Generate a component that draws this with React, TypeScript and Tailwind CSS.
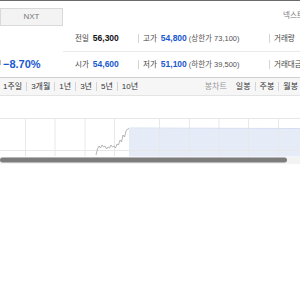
import React from 'react';

const Sep = () => <span className="inline-block shrink-0 w-px h-[9px] bg-[#d4d4d4] mx-[4px] align-middle" />;

const periods = ['1주일', '3개월', '1년', '3년', '5년', '10년'];

const StockChart: React.FC = () => {
  const vlines = [25.5, 55, 85, 114.5, 159.5, 189.5, 219, 248.5, 278.5];
  return (
    <svg width="300" height="46" viewBox="0 0 300 46" className="block">
      <rect x="129" y="10.5" width="171" height="28" fill="#e5ecf8" />
      <line x1="0" y1="0.5" x2="300" y2="0.5" stroke="#e6e6e6" />
      <line x1="0" y1="32.5" x2="300" y2="32.5" stroke="#e8e8e8" />
      {vlines.map((x) => (
        <line key={x} x1={x} y1="0" x2={x} y2="38" stroke="#e8e8e8" />
      ))}
      <line x1="129.5" y1="10" x2="300" y2="10.5" stroke="#d5def0" />
      <polyline
        points="96,37 97.5,31 99,28 100.5,30 102,27 103.5,29 105,28 106.5,31 108,29 109.5,30 111,27 112.5,29 114,28 115.5,30 117,26 118.5,27 120,22 121.5,24 123,17 124.5,19 126,13 127.5,11 129,10.5"
        fill="none"
        stroke="#a3a3a3"
        strokeWidth="0.8"
      />
      <rect x="0" y="39" width="300" height="7" fill="#f3f3f3" />
      <rect x="0" y="39.5" width="287" height="5" rx="2.5" fill="#7d7d7d" />
    </svg>
  );
};

const App: React.FC = () => {
  return (
    <div className="w-[300px] h-[300px] overflow-hidden bg-white font-['Liberation_Sans','Noto_Sans_CJK_KR',sans-serif] text-[#333] whitespace-nowrap">
      <div className="h-px bg-[#6b6b6b]" />
      {/* header */}
      <div className="flex h-[25px]">
        <div className="w-[63px] shrink-0 pt-[7px]">
          <div className="h-[18px] flex items-center justify-center bg-[#f3f3f3] border border-[#d9d9d9] text-[8px] text-[#777]">
            NXT
          </div>
        </div>
        <div className="flex-1 min-w-0 pl-[220px] pt-[9px] text-[7.5px] text-[#777] overflow-hidden">
          넥스트
        </div>
      </div>

      {/* price table */}
      <div className="flex">
        <div className="w-[63px] shrink-0 flex flex-col">
          <div className="h-[26px]" />
          <div className="h-[25px] flex items-center">
            <span className="w-px h-[5px] bg-[#bbb] self-start mt-[8px]" />
            <span className="ml-[2px] text-[11px] font-bold text-[#1859d1]">−8.70%</span>
          </div>
        </div>
        <div className="flex-1 min-w-0 flex flex-col overflow-hidden">
          <div className="h-[26px] flex items-center border-b border-[#e9e9e9] text-[7.5px]">
            <div className="w-[71px] shrink-0 pl-[12px] flex items-center">
              <span className="text-[#444]">전일</span>
              <span className="ml-[4px] text-[8.5px] font-bold text-[#111]">56,300</span>
            </div>
            <Sep />
            <div className="w-[122px] shrink-0 flex items-center">
              <span className="text-[#444]">고가</span>
              <span className="ml-[4px] text-[8.5px] font-bold text-[#1859d1]">54,800</span>
              <span className="ml-[2px] text-[#555]">(상한가 73,100)</span>
            </div>
            <Sep />
            <span className="shrink-0 text-[#444]">거래량</span>
          </div>
          <div className="h-[25px] flex items-center text-[7.5px]">
            <div className="w-[71px] shrink-0 pl-[12px] flex items-center">
              <span className="text-[#444]">시가</span>
              <span className="ml-[4px] text-[8.5px] font-bold text-[#1859d1]">54,600</span>
            </div>
            <Sep />
            <div className="w-[122px] shrink-0 flex items-center">
              <span className="text-[#444]">저가</span>
              <span className="ml-[4px] text-[8.5px] font-bold text-[#1859d1]">51,100</span>
              <span className="ml-[2px] text-[#555]">(하한가 39,500)</span>
            </div>
            <Sep />
            <span className="shrink-0 text-[#444]">거래대금</span>
          </div>
        </div>
      </div>

      {/* period tabs */}
      <div className="h-[19px] flex items-center bg-[#f6f6f7] border-t border-[#cfcfcf] border-b border-b-[#e4e4e4] text-[8px] text-[#333]">
        <div className="flex items-center pl-[3px]">
          {periods.map((p, i) => (
            <React.Fragment key={p}>
              {i > 0 && <Sep />}
              <span>{p}</span>
            </React.Fragment>
          ))}
        </div>
        <div className="flex items-center ml-auto pr-[2px]">
          <span className="text-[#999] mr-[9px]">봉차트</span>
          <span>일봉</span>
          <Sep />
          <span>주봉</span>
          <Sep />
          <span>월봉</span>
        </div>
      </div>

      {/* chart */}
      <div className="pt-[22px]">
        <StockChart />
      </div>
    </div>
  );
};

export default App;
